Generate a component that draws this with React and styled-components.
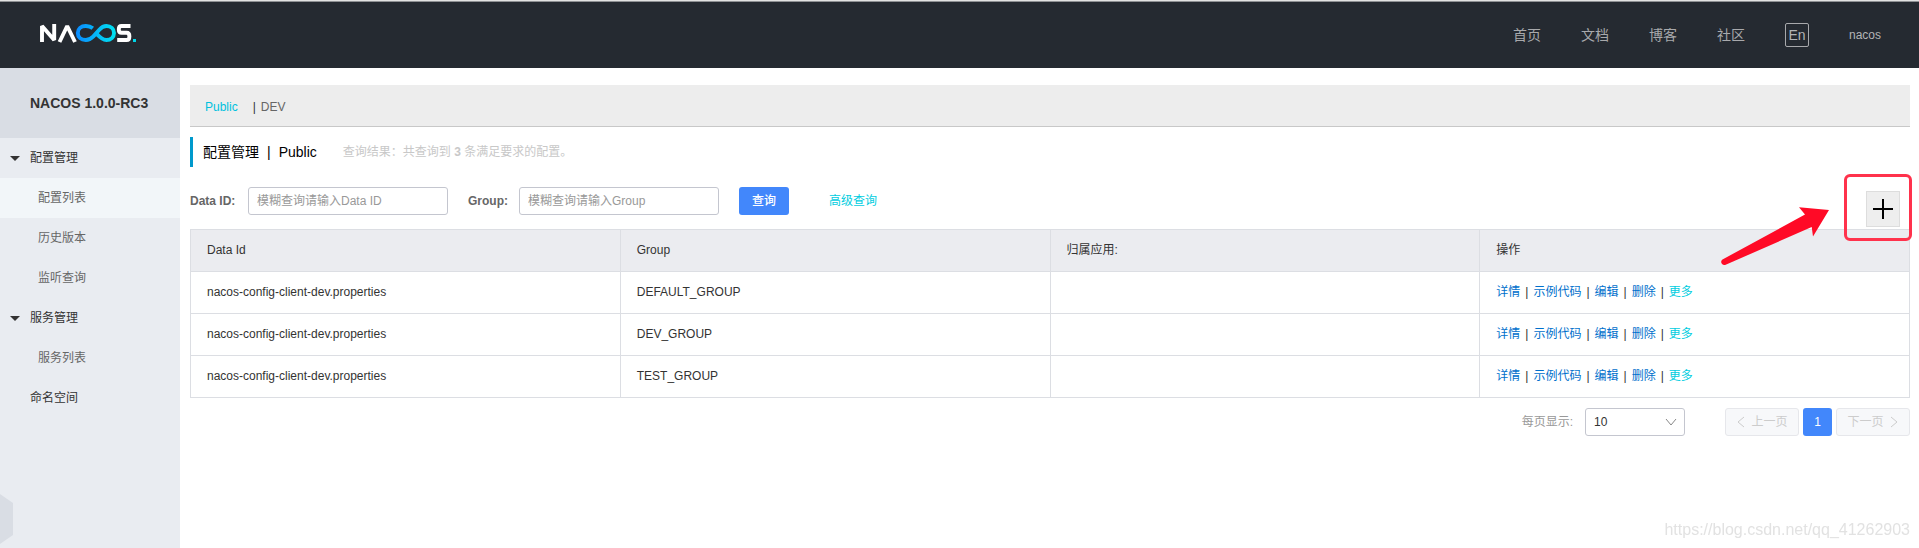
import React, { useState } from 'react'
import styled, { createGlobalStyle } from 'styled-components'

const nav = ['首页', '文档', '博客', '社区']

const menu = [
  { title: '配置管理', children: ['配置列表', '历史版本', '监听查询'] },
  { title: '服务管理', children: ['服务列表'] },
  { title: '命名空间' },
]

const configs = [
  { dataId: 'nacos-config-client-dev.properties', group: 'DEFAULT_GROUP', app: '' },
  { dataId: 'nacos-config-client-dev.properties', group: 'DEV_GROUP', app: '' },
  { dataId: 'nacos-config-client-dev.properties', group: 'TEST_GROUP', app: '' },
]

const Logo = () => (
  <svg width="97" height="20" viewBox="0 0 97 20" role="img" aria-label="Nacos">
    <defs>
      <linearGradient id="loop" gradientUnits="userSpaceOnUse" x1="36" y1="0" x2="76" y2="0">
        <stop offset="0" stopColor="#0a8bff" />
        <stop offset="1" stopColor="#00e3f0" />
      </linearGradient>
    </defs>
    <g fill="none" strokeWidth="3.9">
      <path stroke="#fff" strokeLinejoin="bevel" d="M2 19V3L14.2 17V1" />
      <path stroke="#fff" strokeLinejoin="bevel" d="M19.5 19L27.2 3L35 19" />
      <path
        stroke="url(#loop)"
        d="M52.8 5.2C50.8 3.6 48.5 3 45.8 3C41 3 37.8 6 37.8 10S41 17 45.8 17C49.5 17 51.5 15.3 53.4 13.4L59.3 6.7C61.3 4.5 63.6 3 66.4 3C70.8 3 74 6 74 10S70.8 17 66.4 17C62.8 17 60.2 14.9 56 10"
      />
      <path stroke="#fff" d="M90.5 3H81.5C79.7 3 78.8 4.2 78.8 6.2S79.7 9.8 81.5 9.8H86.6C88.6 9.8 89.4 11.4 89.4 13.4S88.6 17 86.6 17H77.2" />
    </g>
    <rect x="93" y="16" width="3" height="3" fill="#00d5e8" />
  </svg>
)

const Header = () => (
  <TopBar>
    <LogoLink href="#"><Logo /></LogoLink>
    <Nav>
      {nav.map((n) => <NavLink href="#" key={n}>{n}</NavLink>)}
      <Lang type="button">En</Lang>
      <User href="#">nacos</User>
    </Nav>
  </TopBar>
)

const Sidebar = () => {
  const [current, setCurrent] = useState('配置列表')
  return (
    <Side>
      <Version>NACOS 1.0.0-RC3</Version>
      {menu.map((m) => (
        <div key={m.title}>
          <Parent href="#">
            <Caret $show={!!m.children} />
            {m.title}
          </Parent>
          {m.children && m.children.map((c) => (
            <Child href="#" key={c} $active={c === current} onClick={() => setCurrent(c)}>{c}</Child>
          ))}
        </div>
      ))}
      <Handle type="button" aria-label="收起" />
    </Side>
  )
}

const Chevron = ({ d, w = 10, h = 14 }) => (
  <svg width={w} height={h} viewBox={`0 0 ${w} ${h}`} fill="none" stroke="currentColor" aria-hidden="true">
    <path d={d} />
  </svg>
)

const App = () => {
  const [dataId, setDataId] = useState('')
  const [group, setGroup] = useState('')
  const [size, setSize] = useState('10')

  return (
    <Page>
      <GlobalStyle />
      <Header />
      <Body>
        <Sidebar />
        <Main>
          <Namespaces>
            <Space href="#" $active>Public</Space>
            <Bar>|</Bar>
            <Space href="#">DEV</Space>
          </Namespaces>
          <TitleRow>
            <Title>配置管理<Sep>|</Sep>Public</Title>
            <Result>查询结果：共查询到 <b>3</b> 条满足要求的配置。</Result>
          </TitleRow>
          <Search onSubmit={(e) => e.preventDefault()}>
            <Label htmlFor="dataId">Data ID:</Label>
            <Input id="dataId" placeholder="模糊查询请输入Data ID" value={dataId} onChange={(e) => setDataId(e.target.value)} />
            <Label htmlFor="group" $next>Group:</Label>
            <Input id="group" placeholder="模糊查询请输入Group" value={group} onChange={(e) => setGroup(e.target.value)} />
            <Submit type="submit">查询</Submit>
            <Advanced href="#">高级查询</Advanced>
            <AddWrap>
              <Add type="button" aria-label="新建配置">
                <svg width="20" height="20" viewBox="0 0 20 20" stroke="#000" strokeWidth="2" aria-hidden="true">
                  <path d="M0 10H20M10 0V20" />
                </svg>
              </Add>
              <Highlight />
              <Arrow width="110" height="62" viewBox="0 0 110 62" aria-hidden="true">
                <path
                  fill="#ff0a26"
                  d="M2.5 54.5L85 9.5L79 2.3L109 5L93 31.5L91.7 22L5.7 59.8C2 61 -.5 57 2.5 54.5Z"
                />
              </Arrow>
            </AddWrap>
          </Search>
          <Table>
            <thead>
              <tr>
                <Th>Data Id</Th>
                <Th>Group</Th>
                <Th>归属应用:</Th>
                <Th>操作</Th>
              </tr>
            </thead>
            <tbody>
              {configs.map((c) => (
                <tr key={c.group}>
                  <Td>{c.dataId}</Td>
                  <Td>{c.group}</Td>
                  <Td>{c.app}</Td>
                  <Td>
                    <Actions>
                      <Action href="#">详情</Action>|
                      <Action href="#">示例代码</Action>|
                      <Action href="#">编辑</Action>|
                      <Action href="#">删除</Action>|
                      <Action href="#" $more>更多</Action>
                    </Actions>
                  </Td>
                </tr>
              ))}
            </tbody>
          </Table>
          <Pager>
            <SizeLabel htmlFor="size">每页显示:</SizeLabel>
            <SelectBox>
              <Select id="size" value={size} onChange={(e) => setSize(e.target.value)}>
                <option>10</option>
                <option>20</option>
                <option>50</option>
              </Select>
              <SelectIcon><Chevron w={12} h={8} d="M1 1L6 7L11 1" /></SelectIcon>
            </SelectBox>
            <PageBtn type="button" disabled><Chevron d="M8 2L2 7L8 12" />上一页</PageBtn>
            <Current type="button">1</Current>
            <PageBtn type="button" disabled>下一页<Chevron d="M2 2L8 7L2 12" /></PageBtn>
          </Pager>
        </Main>
      </Body>
      <Watermark>https://blog.csdn.net/qq_41262903</Watermark>
    </Page>
  )
}

const GlobalStyle = createGlobalStyle`
  * { box-sizing: border-box; }
  body {
    margin: 0;
    background: #fff;
    color: #333;
    font: 12px/18px "Liberation Sans", "Noto Sans CJK SC", sans-serif;
  }
  a { text-decoration: none; }
  button, input, select { font: inherit; margin: 0; }
  svg { display: block; flex: none; }
`
const Page = styled.div`
  display: flex;
  flex-direction: column;
  min-height: 100vh;
  border-top: 1px solid #e2e2e2;
`
const TopBar = styled.header`
  display: flex;
  align-items: center;
  justify-content: space-between;
  height: 67px;
  padding: 0 38px 0 40px;
  border-top: 1px solid #8f9194;
  background: #252a31;
`
const LogoLink = styled.a`
  display: block;
  padding-bottom: 4px;
`
const Nav = styled.nav`
  display: flex;
  align-items: center;
  gap: 40px;
`
const NavLink = styled.a`
  color: #a8a9ac;
  font-size: 14px;
`
const Lang = styled.button`
  width: 24px;
  height: 24px;
  padding: 0;
  border: 1px solid #a8a9ac;
  border-radius: 2px;
  background: none;
  color: #b3b4b6;
  font-size: 14px;
  line-height: 20px;
`
const User = styled.a`
  color: #b3b4b6;
  font-size: 12px;
`
const Body = styled.div`
  display: flex;
  flex: 1;
`
const Side = styled.aside`
  position: relative;
  flex: none;
  width: 180px;
  background: #e9ecf1;
`
const Version = styled.h1`
  height: 70px;
  margin: 0;
  padding-left: 30px;
  background: #d9dde4;
  font-size: 14px;
  line-height: 70px;
`
const Parent = styled.a`
  display: flex;
  align-items: center;
  height: 40px;
  padding-left: 10px;
  color: #333;
`
const Caret = styled.span`
  width: 10px;
  margin-right: 10px;
  border: 5px solid transparent;
  border-bottom: 0;
  border-top-color: ${(p) => (p.$show ? '#333' : 'transparent')};
`
const Child = styled.a`
  display: flex;
  align-items: center;
  height: 40px;
  padding-left: 38px;
  background: ${(p) => (p.$active ? '#f2f6f9' : 'none')};
  color: #666;
`
const Handle = styled.button`
  position: absolute;
  left: 0;
  bottom: 4px;
  width: 13px;
  height: 50px;
  border: 0;
  padding: 0;
  background: #d9dde4;
  clip-path: polygon(0 0, 100% 18%, 100% 82%, 0 100%);
`
const Main = styled.main`
  flex: 1;
  min-width: 0;
  padding: 17px 9px 0 10px;
`
const Namespaces = styled.div`
  display: flex;
  align-items: center;
  height: 42px;
  padding: 2px 15px 0;
  border-bottom: 1px solid #c8c8c8;
  background: #ededed;
`
const Space = styled.a`
  color: ${(p) => (p.$active ? '#00c1de' : '#666')};
`
const Bar = styled.span`
  margin: 0 5px 0 15px;
`
const TitleRow = styled.div`
  display: flex;
  align-items: center;
  height: 30px;
  margin-top: 10px;
  padding-left: 10px;
  border-left: 3px solid #0099cc;
`
const Title = styled.h2`
  margin: 0;
  color: #000;
  font-size: 14px;
  font-weight: 400;
`
const Sep = styled.span`
  margin: 0 8px;
`
const Result = styled.span`
  margin-left: 26px;
  color: #c8c8c8;
`
const Search = styled.form`
  display: flex;
  align-items: center;
  height: 28px;
  margin: 20px 0 14px;
`
const Label = styled.label`
  width: ${(p) => (p.$next ? '51px' : '58px')};
  margin-left: ${(p) => (p.$next ? '20px' : '0')};
  color: #666;
  font-weight: 700;
`
const Input = styled.input`
  width: 200px;
  height: 28px;
  padding: 0 8px;
  border: 1px solid #c4c6cf;
  border-radius: 3px;
  background: #fff;
  color: #333;
  &::placeholder { color: #999; }
`
const Submit = styled.button`
  width: 50px;
  height: 28px;
  margin: 0 40px 0 20px;
  padding: 0;
  border: 0;
  border-radius: 3px;
  background: #4287fb;
  color: #fff;
  font-weight: 500;
`
const Advanced = styled.a`
  color: #00cde0;
`
const AddWrap = styled.div`
  position: relative;
  margin: 16px 10px 0 auto;
`
const Add = styled.button`
  display: flex;
  align-items: center;
  justify-content: center;
  width: 34px;
  height: 36px;
  padding: 0;
  border: 1px solid #ddd;
  background: #eee;
`
const Highlight = styled.div`
  position: absolute;
  top: -17px;
  right: -12px;
  width: 68px;
  height: 67px;
  border: 3px solid #ff324c;
  border-radius: 6px;
  pointer-events: none;
`
const Arrow = styled.svg`
  position: absolute;
  top: 14px;
  right: 70px;
  pointer-events: none;
`
const Table = styled.table`
  width: 100%;
  table-layout: fixed;
  border-collapse: collapse;
`
const Th = styled.th`
  height: 42px;
  padding: 0 16px 2px;
  border: 1px solid #dcdee3;
  background: #ebecf0;
  color: #333;
  font-weight: 400;
  text-align: left;
`
const Td = styled.td`
  height: 42px;
  padding: 0 16px 2px;
  border: 1px solid #dcdee3;
`
const Actions = styled.div`
  display: flex;
  gap: 5px;
`
const Action = styled.a`
  color: ${(p) => (p.$more ? '#00cde0' : '#0070cc')};
`
const Pager = styled.div`
  display: flex;
  align-items: center;
  justify-content: flex-end;
  gap: 4px;
  margin-top: 10px;
`
const SizeLabel = styled.label`
  margin-right: 8px;
  color: #999;
`
const SelectBox = styled.div`
  position: relative;
  margin-right: 36px;
`
const Select = styled.select`
  display: block;
  width: 100px;
  height: 28px;
  padding: 0 8px;
  border: 1px solid #c4c6cf;
  border-radius: 3px;
  background: #fff;
  color: #333;
  appearance: none;
`
const SelectIcon = styled.span`
  position: absolute;
  top: 10px;
  right: 8px;
  color: #888;
  pointer-events: none;
`
const PageBtn = styled.button`
  display: flex;
  align-items: center;
  justify-content: center;
  gap: 5px;
  width: 74px;
  height: 28px;
  padding: 0;
  border: 1px solid #e6e7eb;
  border-radius: 3px;
  background: #f7f8fa;
  color: #ccc;
`
const Current = styled.button`
  width: 29px;
  height: 28px;
  padding: 0;
  border: 0;
  border-radius: 3px;
  background: #4287fb;
  color: #fff;
`
const Watermark = styled.div`
  position: fixed;
  right: 9px;
  bottom: 8px;
  color: #e2e2e2;
  font-size: 16px;
  line-height: 20px;
`

export default App
